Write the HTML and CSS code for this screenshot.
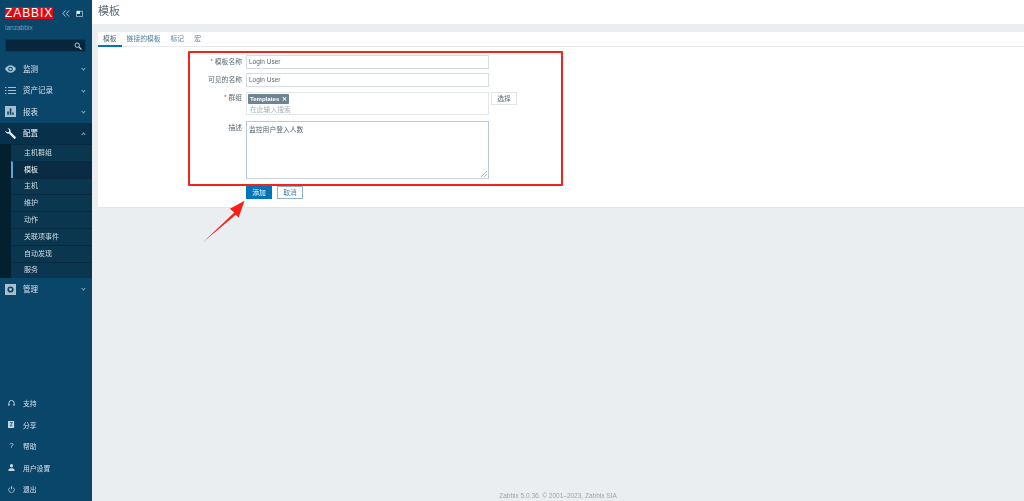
FILE: index.html
```html
<!DOCTYPE html>
<html lang="zh">
<head>
<meta charset="utf-8">
<title>模板</title>
<link rel="stylesheet" href="styles.css">
</head>
<body>
<div class="app">
  <aside class="sidebar">
    <div class="brand">
      <div class="logo">ZABBIX</div>
      <div class="brand-tools">
        <svg class="ico-collapse" viewBox="0 0 9 8"><path d="M4 .5 1 4l3 3.500M8 .5 5 4l3 3.500" fill="none" stroke="#c9d8e2" stroke-width="1"/></svg>
        <svg class="ico-kiosk" viewBox="0 0 8 8"><path d="M.5 1.500h7v6h-7z" fill="none" stroke="#c9d8e2" stroke-width=".8"/><path d="M1 1h3.500v3.500H1z" fill="#e6eef3"/></svg>
      </div>
    </div>
    <div class="username">ianzabbix</div>
    <div class="search">
      <svg viewBox="0 0 9 9"><circle cx="3.600" cy="3.600" r="2.500" fill="none" stroke="#b9cad5" stroke-width="1.100"/><path d="M5.500 5.500 8.400 8.400" stroke="#b9cad5" stroke-width="1.400"/></svg>
    </div>
    <nav class="menu">
      <div class="item">
        <svg class="icon eye" viewBox="0 0 12 8"><path d="M0 4c1.600-2.600 3.600-4 6-4s4.400 1.400 6 4c-1.600 2.600-3.600 4-6 4S1.600 6.600 0 4z" fill="#a9c0cf"/><circle cx="6" cy="4" r="2.500" fill="#0a466a"/><circle cx="6" cy="4" r="1.400" fill="#a9c0cf"/></svg>
        <span class="label">监测</span><span class="chev"></span>
      </div>
      <div class="item">
        <svg class="icon" viewBox="0 0 11 7"><path d="M0 .5h1.500M3 .5h8M0 3.500h1.500M3 3.500h8M0 6.500h1.500M3 6.500h8" stroke="#a9c0cf" stroke-width="1"/></svg>
        <span class="label">资产记录</span><span class="chev"></span>
      </div>
      <div class="item">
        <svg class="icon" viewBox="0 0 10 10"><path d="M0 0h10v10H0z" fill="#a9c0cf"/><path d="M2 5h1.500v3H2zM4.300 2h1.500v6H4.300zM6.500 6h1.500v2H6.500z" fill="#0a466a"/></svg>
        <span class="label">报表</span><span class="chev"></span>
      </div>
      <div class="item open">
        <svg class="icon" viewBox="0 0 11 11"><path d="M10.500 8.800 5.600 3.900C6 2.300 5 .6 3.200.3L2.500.3 4.200 2 3.900 3.900 2 4.200.3 2.500C.2 4.600 2.100 6 3.900 5.600L8.800 10.500c.5.500 1.200.5 1.700 0s.5-1.200 0-1.700z" fill="#dfe8ee"/></svg>
        <span class="label strong">配置</span><span class="chev up"></span>
      </div>
      <div class="sub">
        <a class="sub-item">主机群组</a>
        <a class="sub-item active">模板</a>
        <a class="sub-item">主机</a>
        <a class="sub-item">维护</a>
        <a class="sub-item">动作</a>
        <a class="sub-item">关联项事件</a>
        <a class="sub-item">自动发现</a>
        <a class="sub-item">服务</a>
      </div>
      <div class="item">
        <svg class="icon" viewBox="0 0 10 10"><path d="M0 0h10v10H0z" fill="#a9c0cf"/><circle cx="5" cy="5" r="2.800" fill="#0a466a"/><circle cx="5" cy="5" r="1.300" fill="#a9c0cf"/></svg>
        <span class="label">管理</span><span class="chev"></span>
      </div>
    </nav>
    <nav class="menu-bottom">
      <div class="item small">
        <svg class="icon-s" viewBox="0 0 8 8"><path d="M1 6V3.500a3 3 0 0 1 6 0V6" fill="none" stroke="#c5d5df" stroke-width="1.100"/><path d="M.5 4.500h1.200v2H.5zM6.300 4.500h1.200v2H6.300z" fill="#c5d5df"/></svg>
        <span class="label">支持</span>
      </div>
      <div class="item small">
        <svg class="icon-s" viewBox="0 0 8 8"><path d="M0 0h7v8H0z" fill="#c5d5df"/><path d="M2 1.800h3L2.500 5.500H5" fill="none" stroke="#0a466a" stroke-width=".9"/></svg>
        <span class="label">分享</span>
      </div>
      <div class="item small">
        <span class="icon-q">?</span>
        <span class="label">帮助</span>
      </div>
      <div class="item small">
        <svg class="icon-s" viewBox="0 0 8 8"><circle cx="4" cy="2" r="1.900" fill="#c5d5df"/><path d="M.5 8V6.500C.5 5.500 2 4.800 4 4.800s3.500.7 3.500 1.700V8z" fill="#c5d5df"/></svg>
        <span class="label">用户设置</span>
      </div>
      <div class="item small">
        <svg class="icon-s" viewBox="0 0 8 8"><path d="M2.200 1.700a3.200 3.200 0 1 0 3.600 0" fill="none" stroke="#c5d5df" stroke-width=".9"/><path d="M4 0v3.800" stroke="#c5d5df" stroke-width=".9"/></svg>
        <span class="label">退出</span>
      </div>
    </nav>
  </aside>
  <main class="main">
    <header class="page-head"><h1>模板</h1></header>
    <section class="panel">
      <div class="tabs">
        <a class="tab active">模板</a>
        <a class="tab">链接的模板</a>
        <a class="tab">标记</a>
        <a class="tab">宏</a>
      </div>
      <form class="form">
        <label class="f-label"><i>*</i> 模板名称</label>
        <div class="field"><div class="input">Login User</div></div>
        <label class="f-label">可见的名称</label>
        <div class="field"><div class="input">Login User</div></div>
        <label class="f-label"><i>*</i> 群组</label>
        <div class="field">
          <div class="multi">
            <span class="chip">Templates <b>✕</b></span>
            <span class="placeholder">在此输入搜索</span>
          </div>
          <div class="btn-alt">选择</div>
        </div>
        <label class="f-label">描述</label>
        <div class="field"><div class="textarea">监控用户登入人数<svg class="grip" viewBox="0 0 6 6"><path d="M0 6 6 0M3 6l3-3" stroke="#8a979f" stroke-width=".7"/></svg></div></div>
        <div class="actions">
          <div class="btn-primary">添加</div>
          <div class="btn-ghost">取消</div>
        </div>
      </form>
    </section>
    <footer class="foot">Zabbix 5.0.36. © 2001–2023, Zabbix SIA</footer>
  </main>
</div>
<div class="red-box"></div>
<svg class="red-arrow" viewBox="0 0 60 60"><path d="M1 58 44 17 38 12 58 1 50 24 46 20z" fill="#f5221c"/></svg>
</body>
</html>
```
FILE: styles.css
```css
* { box-sizing: border-box; }
html, body { margin: 0; height: 100%; overflow: hidden; }
body { background: #ebeef0; font-family: "Noto Sans CJK SC", "Liberation Sans", sans-serif; }
.app { display: flex; width: 1024px; height: 501px; filter: blur(.5px); }

.sidebar { width: 92px; flex: none; height: 501px; background: #0a466a; display: flex; flex-direction: column; color: #dfe8ee; }
.brand { display: flex; align-items: center; padding: 7px 0 0 5px; height: 19px; }
.logo { width: 48px; height: 12px; background: #dc0a14; color: #fff; font: 12px/12px "Liberation Sans", sans-serif; letter-spacing: .9px; text-align: center; }
.brand-tools { display: flex; align-items: center; gap: 6px; margin-left: 9px; }
.ico-collapse { width: 8px; height: 7px; }
.ico-kiosk { width: 7px; height: 7px; }
.username { font: 6.500px/9px "Liberation Sans", sans-serif; color: #7d9db2; padding: 4px 0 0 5px; height: 20px; }
.search { margin-left: 5px; width: 81px; height: 13px; background: #06263b; border: 1px solid #0c3a56; border-radius: 1px; display: flex; justify-content: flex-end; align-items: center; padding-right: 3px; }
.search svg { width: 8px; height: 8px; }

.menu { margin-top: 6px; }
.item { height: 21.500px; display: flex; align-items: center; padding-left: 5px; position: relative; }
.item.open { background: #07304a; }
.icon { width: 11px; height: 11px; flex: none; }
.icon.eye { height: 8px; }
.label { margin-left: 7px; font-size: 7.500px; line-height: 10px; color: #d4e0e8; }
.label.strong { color: #f2f6f8; }
.chev { position: absolute; right: 7px; top: 9px; width: 3px; height: 3px; border-right: 1px solid #8fa9ba; border-bottom: 1px solid #8fa9ba; transform: rotate(45deg); }
.chev.up { transform: rotate(225deg); top: 10px; }

.sub { background: #03202f; padding-left: 11px; }
.sub-item { display: flex; align-items: center; height: 16.800px; padding: 0 0 2px 11px; background: #0b3650; border-top: 1px solid #072a40; font-size: 7px; color: #d0dde5; border-left: 2px solid transparent; }
.sub-item.active { background: #092c44; border-left-color: #5ba7d3; color: #f2f6f8; }

.menu-bottom { margin-top: auto; padding-bottom: 1px; }
.item.small { padding-left: 8px; }
.item.small .label { margin-left: 8px; font-size: 6.800px; }
.icon-s { width: 7px; height: 7px; flex: none; }
.icon-q { width: 7px; text-align: center; font: 8px/8px "Liberation Sans", sans-serif; color: #c5d5df; }

.main { flex: 1; min-width: 0; display: flex; flex-direction: column; }
.page-head { height: 24px; background: #fff; padding-left: 6px; }
h1 { margin: 0; font-size: 11px; line-height: 21px; font-weight: 400; color: #5a6a72; }
.panel { margin: 8px 0 0 6px; height: 176px; background: #fff; border-bottom: 1px solid #e2e6e8; }
.tabs { height: 15px; display: flex; border-bottom: 1px solid #e6eaec; }
.tab { height: 15px; padding: 0 5px; font-size: 6.800px; line-height: 13px; color: #4d80a5; }
.tab.active { color: #56646c; border-bottom: 2px solid #0275b8; }

.form { display: grid; grid-template-columns: 144px 1fr; column-gap: 4px; row-gap: 4px; padding-top: 8px; }
.f-label { text-align: right; font-size: 6.800px; line-height: 12px; color: #59686f; }
.f-label i { color: #e33734; font-style: normal; }
.field { display: flex; align-items: flex-start; gap: 2px; }
.input { width: 243px; height: 14px; border: 1px solid #d5dde2; background: #fff; font: 6.500px/12px "Liberation Sans", sans-serif; color: #5a6a72; padding-left: 2px; }
.multi { width: 243px; height: 23px; border: 1px solid #e3e7ea; display: flex; flex-direction: column; align-items: flex-start; padding: 1px; gap: 1px; margin: 1px 0 2px; }
.chip { height: 10px; background: #6d8491; color: #fff; font: bold 6px/10px "Liberation Sans", sans-serif; padding: 0 2px; white-space: pre; border-radius: 1px; }
.chip b { font-size: 6px; margin-left: 1px; }
.placeholder { font-size: 6.800px; line-height: 9px; color: #a7b2b8; padding-left: 2px; }
.btn-alt { width: 26px; height: 13px; border: 1px solid #dfe5e9; font-size: 6.800px; line-height: 11px; text-align: center; color: #55646c; margin-top: 1px; }
.textarea { width: 243px; height: 58px; border: 1px solid #b5c7d8; border-bottom-color: #ccd5e0; font-size: 6.800px; line-height: 12px; color: #55646c; padding: 1px 0 0 2px; position: relative; }
.grip { position: absolute; right: 1px; bottom: 1px; width: 6px; height: 6px; }
.actions { grid-column: 2; display: flex; gap: 5px; margin-top: 3px; }
.btn-primary, .btn-ghost { width: 26px; height: 13px; font-size: 6.800px; line-height: 11px; text-align: center; border: 1px solid #0275b8; }
.btn-primary { background: #0275b8; color: #fff; }
.btn-ghost { background: #fff; color: #4d80a5; border-color: #8fb3cd; }

.foot { margin-top: auto; text-align: center; font: 6.500px/9px "Liberation Sans", sans-serif; color: #9aa5ab; padding: 0 0 1px 0; }

.red-box { position: absolute; left: 188px; top: 51px; width: 375px; height: 135px; border: 2px solid #f5221c; border-radius: 1px; }
.red-arrow { position: absolute; left: 201px; top: 200px; width: 46px; height: 44px; }
```
